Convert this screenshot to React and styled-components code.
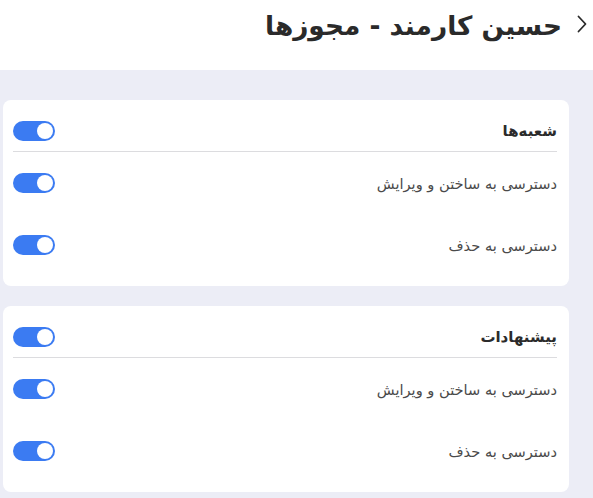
import React, { useState } from "react";
import styled, { createGlobalStyle } from "styled-components";

const Global = createGlobalStyle`
  html, body { margin: 0; padding: 0; background: #ecedf6; }
  body { font-family: "DejaVu Sans", "Noto Sans", sans-serif; }
  * { box-sizing: border-box; }
`;

const Page = styled.div`
  direction: rtl;
  width: 593px;
  min-height: 498px;
  background: #ecedf6;
`;

const Header = styled.header`
  height: 70px;
  background: #ffffff;
  display: flex;
  align-items: center;
  gap: 15px;
  padding: 0 6px 20px 0;
`;

const Back = styled.button`
  border: none;
  background: none;
  padding: 0;
  width: 10px;
  height: 18px;
  display: flex;
  align-items: center;
  justify-content: center;
  color: #333;
  cursor: pointer;
  margin-top: -2px;
`;

const Title = styled.h1`
  margin: 0;
  font-size: 26.4px;
  font-weight: 700;
  color: #2a2a2a;
`;

const Content = styled.main`
  display: flex;
  flex-direction: column;
  gap: 20px;
  padding: 30px 24px 6px 3px;
`;

const Card = styled.section`
  background: #ffffff;
  border-radius: 8px;
  padding: 10px 12px 10px 10px;
  display: flex;
  flex-direction: column;
`;

const Row = styled.div`
  display: flex;
  align-items: center;
  justify-content: space-between;
  height: ${(p) => (p.$head ? "42px" : "62px")};
  border-bottom: ${(p) => (p.$head ? "1px solid #dcdcdf" : "none")};
`;

const Label = styled.span`
  font-size: ${(p) => (p.$head ? "15px" : "14.6px")};
  font-weight: ${(p) => (p.$head ? 700 : 400)};
  color: ${(p) => (p.$head ? "#2b2b2b" : "#4a4a4a")};
`;

const Track = styled.button`
  width: 42px;
  height: 20px;
  border-radius: 10px;
  border: none;
  padding: 0 2px;
  background: ${(p) => (p.$on ? "#3b7bf2" : "#c8c8cf")};
  display: flex;
  align-items: center;
  justify-content: ${(p) => (p.$on ? "flex-end" : "flex-start")};
  cursor: pointer;
  direction: ltr;
`;

const Knob = styled.span`
  width: 16px;
  height: 16px;
  border-radius: 50%;
  background: #ffffff;
`;

function Toggle({ initial = true }) {
  const [on, setOn] = useState(initial);
  return (
    <Track $on={on} onClick={() => setOn(!on)} aria-pressed={on}>
      <Knob />
    </Track>
  );
}

const groups = [
  { title: "شعبه‌ها", items: ["دسترسی به ساختن و ویرایش", "دسترسی به حذف"] },
  { title: "پیشنهادات", items: ["دسترسی به ساختن و ویرایش", "دسترسی به حذف"] },
];

export default function App() {
  return (
    <Page>
      <Global />
      <Header>
        <Back aria-label="back">
          <svg width="10" height="18" viewBox="0 0 10 18" fill="none">
            <path d="M1.5 1.5 L8.5 9 L1.5 16.5" stroke="#2a2a2a" strokeWidth="1.8" strokeLinecap="round" strokeLinejoin="round" />
          </svg>
        </Back>
        <Title>حسین کارمند - مجوزها</Title>
      </Header>
      <Content>
        {groups.map((g) => (
          <Card key={g.title}>
            <Row $head>
              <Label $head>{g.title}</Label>
              <Toggle />
            </Row>
            {g.items.map((it) => (
              <Row key={it}>
                <Label>{it}</Label>
                <Toggle />
              </Row>
            ))}
          </Card>
        ))}
      </Content>
    </Page>
  );
}
